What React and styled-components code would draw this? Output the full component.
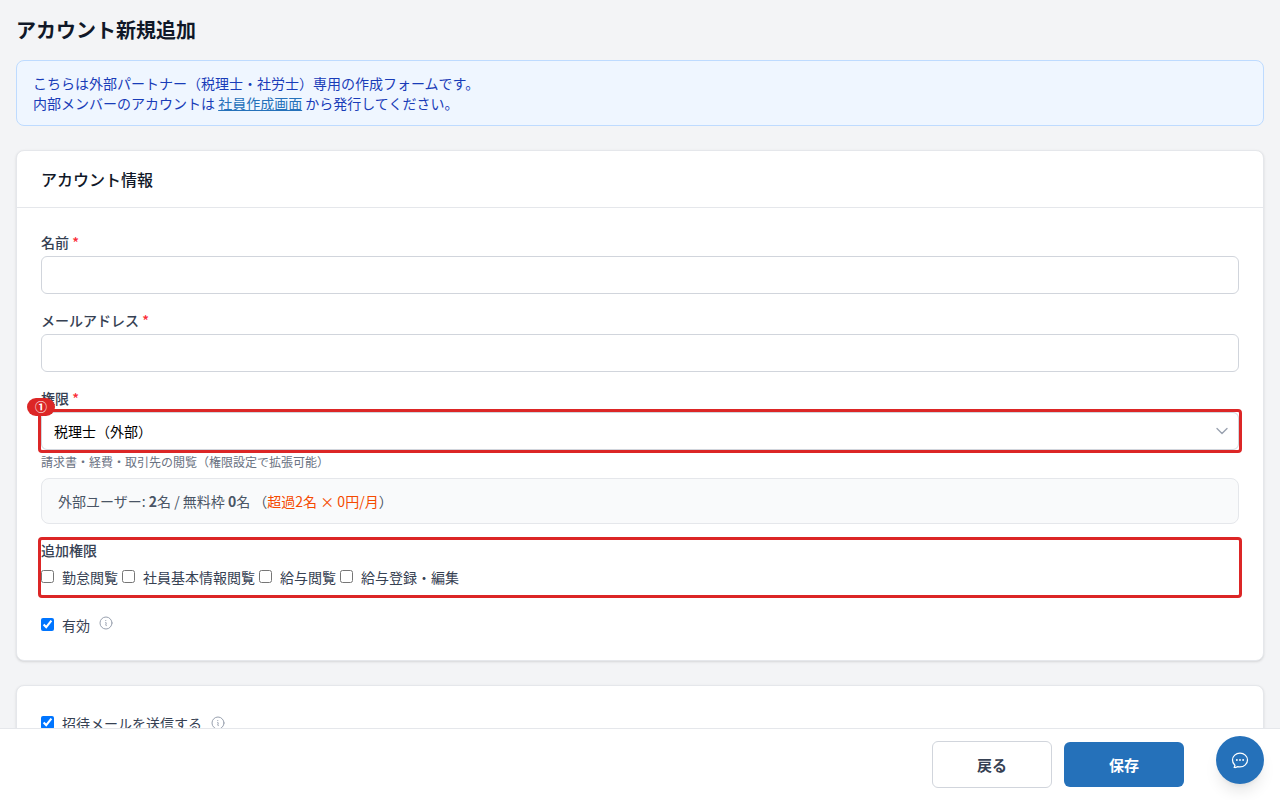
import React from "react";
import styled, { createGlobalStyle, css } from "styled-components";
import {
  HiOutlineChatBubbleOvalLeftEllipsis,
  HiOutlineInformationCircle,
  HiOutlineChevronDown,
} from "react-icons/hi2";

const GlobalStyle = createGlobalStyle`
  *, *::before, *::after { box-sizing: border-box; }
  html, body { margin: 0; height: 100%; overflow: hidden; }
  body {
    background: #f3f4f6;
    color: #364153;
    font-family: "Noto Sans CJK JP", sans-serif;
    font-size: 14px;
    line-height: 20px;
  }
  #root { height: 100%; }
  button, input, select { font: inherit; color: inherit; }
`;

const Page = styled.div`
  height: 100%;
  display: flex;
  flex-direction: column;
`;

const Content = styled.main`
  flex: 1;
  min-height: 0;
  overflow-y: auto;
  scrollbar-width: none;
  padding: 16px 16px 0;
`;

const Title = styled.h1`
  margin: 0 0 16px;
  color: #101828;
  font-size: 20px;
  line-height: 28px;
  font-weight: 700;
`;

const Notice = styled.p`
  margin: 0 0 24px;
  padding: 12px 16px;
  border: 1px solid #bedbff;
  border-radius: 8px;
  background: #eff6ff;
  color: #193cb8;
`;

const NoticeLink = styled.a`
  color: #2571ba;
  text-decoration: underline;
`;

const Card = styled.section`
  margin-bottom: 24px;
  border: 1px solid #e5e7eb;
  border-radius: 8px;
  background: #fff;
  box-shadow: 0 1px 3px rgba(0, 0, 0, 0.1), 0 1px 2px -1px rgba(0, 0, 0, 0.1);
`;

const CardHeader = styled.header`
  padding: 16px 24px;
  border-bottom: 1px solid #e5e7eb;
`;

const CardTitle = styled.h2`
  margin: 0;
  color: #101828;
  font-size: 16px;
  line-height: 24px;
  font-weight: 500;
`;

const CardBody = styled.div`
  padding: 24px;
`;

const Field = styled.div`
  margin-bottom: 16px;
`;

const labelStyle = css`
  display: block;
  margin-bottom: 4px;
  padding: 0;
  font-weight: 500;
`;

const Label = styled.label`
  ${labelStyle}
`;

const Required = styled.span`
  color: #fb2c36;
`;

const controlStyle = css`
  display: block;
  width: 100%;
  height: 38px;
  padding: 8px 12px;
  border: 1px solid #d1d5dc;
  border-radius: 6px;
  background: #fff;
`;

const TextInput = styled.input`
  ${controlStyle}
`;

const Select = styled.select`
  ${controlStyle}
  appearance: none;
  color: #000;
`;

const SelectChevron = styled(HiOutlineChevronDown)`
  position: absolute;
  top: 11px;
  right: 9px;
  width: 16px;
  height: 16px;
  color: #99a1af;
  pointer-events: none;

  path {
    stroke-width: 2;
  }
`;

const Highlight = styled.div`
  position: relative;

  &::after {
    content: "";
    position: absolute;
    inset: -3px;
    border: 3px solid #dc2626;
    border-radius: 4px;
    pointer-events: none;
  }
`;

const Marker = styled.span`
  position: absolute;
  z-index: 1;
  top: -14px;
  left: -14px;
  padding: 0 8px;
  border-radius: 9px;
  background: #dc2626;
  color: #fff;
  font-size: 12px;
  line-height: 18px;
  font-weight: 700;
`;

const Hint = styled.p`
  margin: 4px 0 8px;
  color: #6a7282;
  font-size: 12px;
  line-height: 16px;
`;

const Usage = styled.div`
  margin-bottom: 16px;
  padding: 12px 16px;
  border: 1px solid #e5e7eb;
  border-radius: 8px;
  background: #f9fafb;
  color: #4a5565;
`;

const Overage = styled.span`
  color: #f54a00;
`;

const PermissionGroup = styled.fieldset`
  min-width: 0;
  margin: 0;
  padding: 0 0 8px;
  border: 0;
`;

const Legend = styled.legend`
  ${labelStyle}
  margin-bottom: 7px;
`;

const CheckRow = styled.div`
  display: flex;
  align-items: ${({ $align = "center" }) => $align};
  gap: ${({ $gap }) => $gap}px;
  margin-top: ${({ $top = 0 }) => $top}px;
`;

const ActiveRow = styled(CheckRow)`
  min-height: 21px;
`;

const CheckLabel = styled.label`
  display: inline-flex;
  align-items: flex-start;
  gap: 8px;
`;

const Checkbox = styled.input`
  width: 13px;
  height: 13px;
  margin: 3px 0 0;
`;

const InfoIcon = styled(HiOutlineInformationCircle)`
  width: 16px;
  height: 16px;
  color: #99a1af;
`;

const ActionBar = styled.footer`
  display: flex;
  align-items: center;
  justify-content: flex-end;
  gap: 12px;
  height: 72px;
  padding: 0 96px 0 16px;
  border-top: 1px solid #e5e7eb;
  background: #fff;
`;

const ActionButton = styled.button`
  width: 120px;
  height: ${({ $primary }) => ($primary ? 45 : 47)}px;
  padding: 0;
  border: ${({ $primary }) => ($primary ? "0" : "1px solid #d1d5dc")};
  border-radius: 6px;
  background: ${({ $primary }) => ($primary ? "#2571ba" : "#fff")};
  color: ${({ $primary }) => ($primary ? "#fff" : "#364153")};
  font-size: 15px;
  font-weight: 700;
`;

const ChatButton = styled.button`
  position: fixed;
  right: 16px;
  bottom: 16px;
  display: flex;
  align-items: center;
  justify-content: center;
  width: 48px;
  height: 48px;
  padding: 0;
  border: 0;
  border-radius: 50%;
  background: #2571ba;
  color: #fff;
  box-shadow: 0 10px 15px -3px rgba(0, 0, 0, 0.1), 0 4px 6px -4px rgba(0, 0, 0, 0.1);
`;

const permissions = ["勤怠閲覧", "社員基本情報閲覧", "給与閲覧", "給与登録・編集"];

function TextField({ id, label, type = "text" }) {
  return (
    <Field>
      <Label htmlFor={id}>
        {label} <Required>*</Required>
      </Label>
      <TextInput id={id} type={type} required />
    </Field>
  );
}

function CheckOption({ children, defaultChecked }) {
  return (
    <CheckLabel>
      <Checkbox type="checkbox" defaultChecked={defaultChecked} />
      {children}
    </CheckLabel>
  );
}

export default function App() {
  return (
    <Page lang="ja">
      <GlobalStyle />
      <Content>
        <Title>アカウント新規追加</Title>
        <Notice>
          こちらは外部パートナー（税理士・社労士）専用の作成フォームです。
          <br />
          内部メンバーのアカウントは <NoticeLink href="#members">社員作成画面</NoticeLink> から発行してください。
        </Notice>

        <Card>
          <CardHeader>
            <CardTitle>アカウント情報</CardTitle>
          </CardHeader>
          <CardBody>
            <TextField id="name" label="名前" />
            <TextField id="email" label="メールアドレス" type="email" />
            <Label htmlFor="role">
              権限 <Required>*</Required>
            </Label>
            <Highlight>
              <Marker>①</Marker>
              <Select id="role" defaultValue="tax">
                <option value="tax">税理士（外部）</option>
              </Select>
              <SelectChevron aria-hidden="true" />
            </Highlight>
            <Hint>請求書・経費・取引先の閲覧（権限設定で拡張可能）</Hint>
            <Usage>
              外部ユーザー: <strong>2</strong>名 / 無料枠 <strong>0</strong>名 （
              <Overage>超過2名 × 0円/月</Overage>）
            </Usage>
            <Highlight>
              <PermissionGroup>
                <Legend>追加権限</Legend>
                <CheckRow $gap={4}>
                  {permissions.map((name) => (
                    <CheckOption key={name}>{name}</CheckOption>
                  ))}
                </CheckRow>
              </PermissionGroup>
            </Highlight>
            <ActiveRow $gap={8} $top={20} $align="flex-start">
              <CheckOption defaultChecked>有効</CheckOption>
              <InfoIcon aria-hidden="true" />
            </ActiveRow>
          </CardBody>
        </Card>

        <Card>
          <CardBody>
            <CheckRow $gap={8} $top={3}>
              <CheckOption defaultChecked>招待メールを送信する</CheckOption>
              <InfoIcon aria-hidden="true" />
            </CheckRow>
          </CardBody>
        </Card>
      </Content>

      <ActionBar>
        <ActionButton type="button">戻る</ActionButton>
        <ActionButton type="submit" $primary>
          保存
        </ActionButton>
      </ActionBar>
      <ChatButton type="button" aria-label="チャット">
        <HiOutlineChatBubbleOvalLeftEllipsis size={20} />
      </ChatButton>
    </Page>
  );
}
